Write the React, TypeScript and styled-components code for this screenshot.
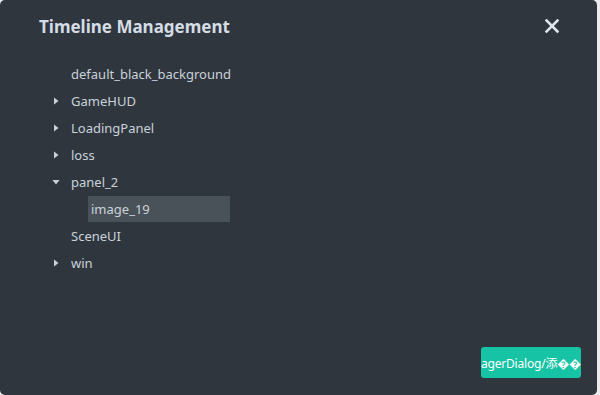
import styled, { createGlobalStyle } from "styled-components";

const GlobalStyle = createGlobalStyle`
  html, body {
    margin: 0;
    padding: 0;
    background: #e9ebed;
  }
  body {
    font-family: "Noto Sans", "Noto Sans CJK SC", sans-serif;
  }
`;

type Node = {
  name: string;
  depth: number;
  arrow?: "closed" | "open";
  selected?: boolean;
};

const nodes: Node[] = [
  { name: "default_black_background", depth: 0 },
  { name: "GameHUD", depth: 0, arrow: "closed" },
  { name: "LoadingPanel", depth: 0, arrow: "closed" },
  { name: "loss", depth: 0, arrow: "closed" },
  { name: "panel_2", depth: 0, arrow: "open" },
  { name: "image_19", depth: 1, selected: true },
  { name: "SceneUI", depth: 0 },
  { name: "win", depth: 0, arrow: "closed" },
];

const Arrow = ({ open }: { open: boolean }) => (
  <svg width="8" height="8" viewBox="0 0 8 8">
    {open ? (
      <path d="M0.5 2 L7.5 2 L4 6.5 Z" fill="#c9d2da" />
    ) : (
      <path d="M2 0.5 L6.5 4 L2 7.5 Z" fill="#c9d2da" />
    )}
  </svg>
);

const App = () => {
  return (
    <>
      <GlobalStyle />
      <S.Dialog>
        <S.Header>
          <S.Title>Timeline Management</S.Title>
          <S.Close aria-label="close">
            <svg width="14" height="14" viewBox="0 0 14 14">
              <path
                d="M1.5 1.5 L12.5 12.5 M12.5 1.5 L1.5 12.5"
                stroke="#dfe5ea"
                strokeWidth="2.6"
                strokeLinecap="square"
              />
            </svg>
          </S.Close>
        </S.Header>

        <S.Tree>
          {nodes.map((node) => (
            <S.Row key={node.name} $depth={node.depth}>
              <S.Toggle>
                {node.arrow && <Arrow open={node.arrow === "open"} />}
              </S.Toggle>
              <S.Label $selected={node.selected}>{node.name}</S.Label>
            </S.Row>
          ))}
        </S.Tree>

        <S.Footer>
          <S.Button>agerDialog/添{"\uFFFD\uFFFD"}</S.Button>
        </S.Footer>
      </S.Dialog>
    </>
  );
};

export default App;

const S = {
  Dialog: styled.div`
    width: 597px;
    height: 395px;
    box-sizing: border-box;
    background: #30363d;
    border-radius: 5px;
    display: flex;
    flex-direction: column;
    color: #c9d2da;
  `,
  Header: styled.div`
    display: flex;
    align-items: center;
    justify-content: space-between;
    padding: 13px 38px 0 39px;
    height: 26px;
  `,
  Title: styled.h1`
    margin: 0;
    font-size: 17px;
    font-weight: 700;
    color: #d4dde5;
  `,
  Close: styled.button`
    display: flex;
    padding: 0;
    border: 0;
    background: none;
  `,
  Tree: styled.ul`
    list-style: none;
    margin: 21px 0 0;
    padding: 0 0 0 52px;
    display: flex;
    flex-direction: column;
  `,
  Row: styled.li<{ $depth: number }>`
    display: flex;
    align-items: center;
    height: 27px;
    padding-left: ${(p) => p.$depth * 20}px;
  `,
  Toggle: styled.span`
    width: 19px;
    display: flex;
    align-items: center;
  `,
  Label: styled.span<{ $selected?: boolean }>`
    font-size: 13px;
    line-height: 26px;
    color: #c9d2da;
    ${(p) =>
      p.$selected &&
      `
      background: #4a5259;
      width: 142px;
      padding-left: 3px;
      margin-left: -3px;
      box-sizing: border-box;
    `}
  `,
  Footer: styled.div`
    margin-top: auto;
    display: flex;
    justify-content: flex-end;
    padding: 0 16px 17px 0;
  `,
  Button: styled.button`
    width: 100px;
    height: 31px;
    border: 0;
    border-radius: 3px;
    background: #17c3a5;
    color: #ffffff;
    font-family: "Noto Sans", "Noto Sans CJK SC", sans-serif;
    font-size: 12px;
    letter-spacing: -0.2px;
    padding: 0;
    overflow: hidden;
    display: flex;
    align-items: center;
    justify-content: flex-start;
    white-space: nowrap;
  `,
};
